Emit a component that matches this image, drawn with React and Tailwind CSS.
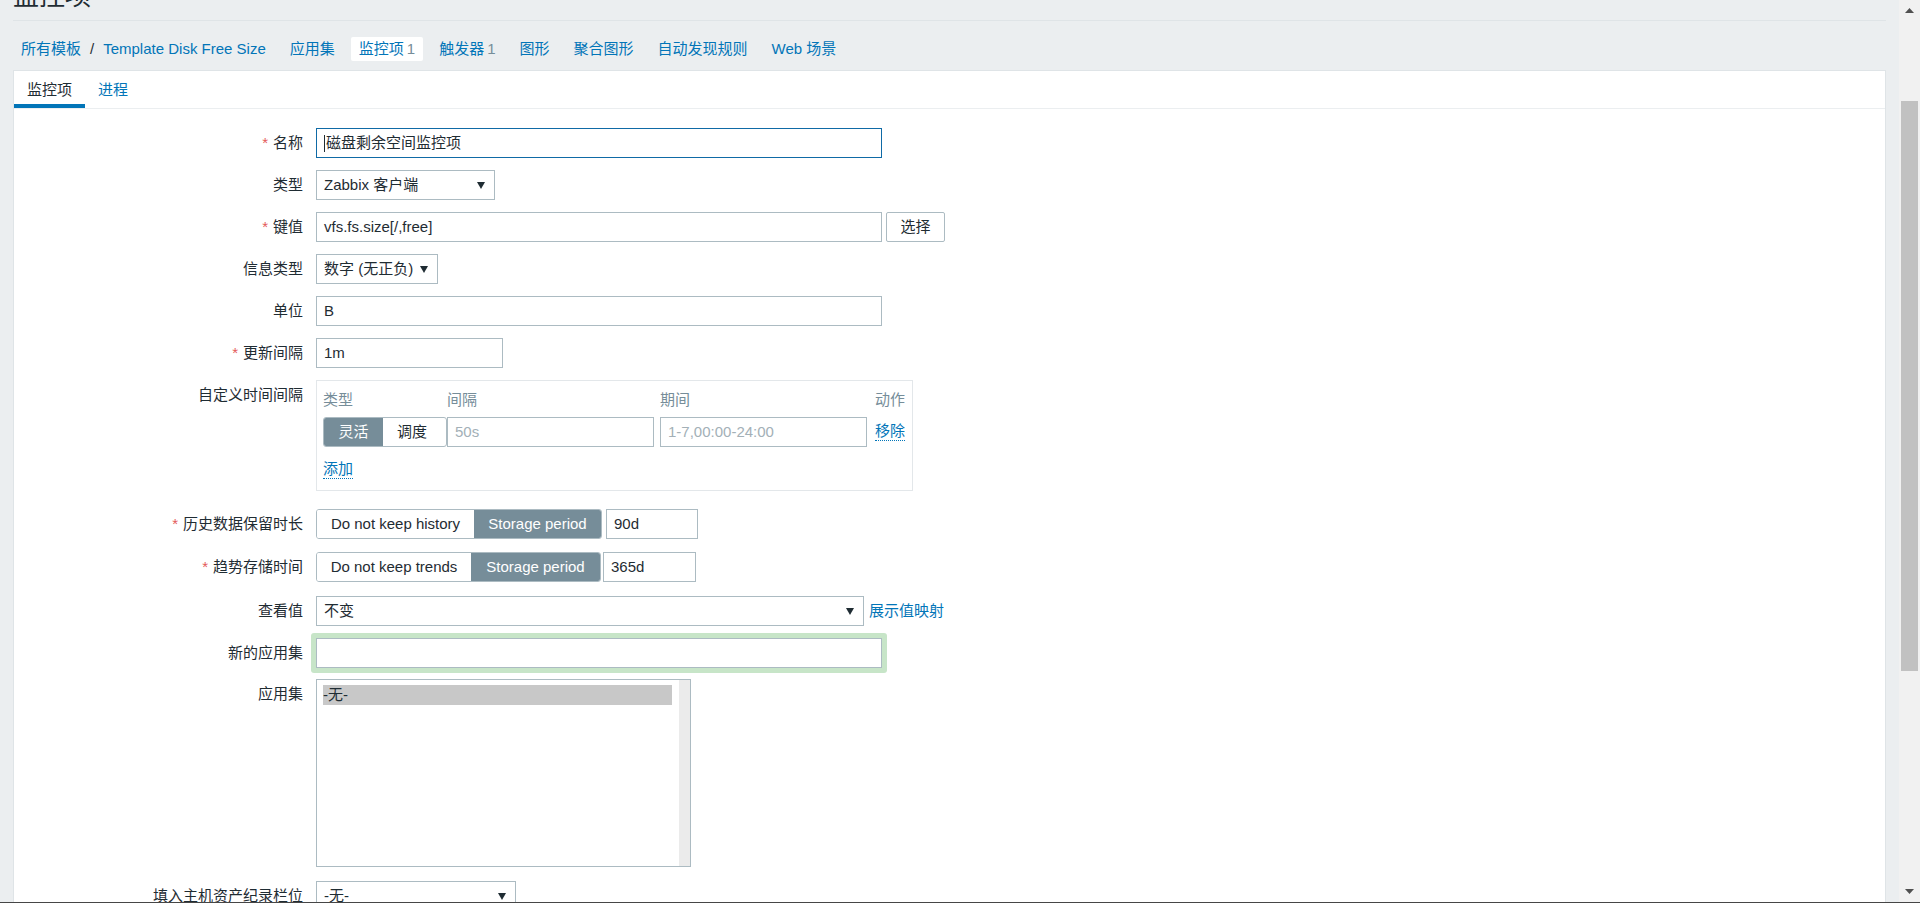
import React from "react";

const Arrow = () => (
  <svg width="8" height="7" viewBox="0 0 8 7" className="shrink-0">
    <polygon points="0,0 8,0 4,7" fill="#1f2c33" />
  </svg>
);

const Label = ({ children, req, className = "" }) => (
  <div className={`w-[302px] shrink-0 pr-[13px] text-right leading-[30px] text-[#1f2c33] ${className}`}>
    {req && <span className="mr-[5px] text-[#e45959]">*</span>}
    {children}
  </div>
);

const Field = ({ children, className = "" }) => (
  <div className={`flex h-[30px] shrink-0 items-center border bg-white pl-[7px] ${className}`}>
    {children}
  </div>
);

const Select = ({ value, className = "" }) => (
  <Field className={`justify-between border-[#acbbc2] pr-[9px] text-[#1f2c33] ${className}`}>
    <span>{value}</span>
    <Arrow />
  </Field>
);

const Segmented = ({ items, active, widths }) => (
  <div className="flex h-[30px] shrink-0 overflow-hidden rounded-[3px] border border-[#acbbc2]">
    {items.map((it, i) => (
      <div
        key={it}
        className={`flex items-center justify-center ${widths[i]} ${
          i === active ? "bg-[#768d99] text-white" : "bg-white text-[#1f2c33]"
        }`}
      >
        {it}
      </div>
    ))}
  </div>
);

const Row = ({ children, className = "mb-[12px]" }) => <div className={`flex ${className}`}>{children}</div>;

const ActionLink = ({ children }) => (
  <span className="border-b border-dotted border-[#0275b8] pb-[1px] leading-[16px] text-[#0275b8]">{children}</span>
);

const Scrollbar = () => (
  <div className="flex w-[21px] shrink-0 flex-col bg-[#f1f1f1]">
    <div className="flex h-[21px] items-center justify-center">
      <svg width="9" height="5" viewBox="0 0 9 5">
        <polygon points="4.5,0 9,5 0,5" fill="#505050" />
      </svg>
    </div>
    <div className="ml-[2px] mt-[80px] h-[570px] w-[17px] bg-[#c1c1c1]" />
    <div className="flex-1" />
    <div className="flex h-[21px] items-center justify-center">
      <svg width="9" height="5" viewBox="0 0 9 5">
        <polygon points="0,0 9,0 4.5,5" fill="#505050" />
      </svg>
    </div>
  </div>
);

const navItems = ["图形", "聚合图形", "自动发现规则", "Web 场景"];

export default function App() {
  return (
    <div className="flex h-[903px] w-full overflow-hidden border-b border-[#464646] bg-[#ebeef0] text-[15px] text-[#1f2c33] font-['Liberation_Sans','Noto_Sans_CJK_SC',sans-serif]">
      <div className="min-w-0 flex-1 px-[13px]">
        <div className="mt-[-17px] border-b border-[#dfe4e7] pb-[11px]">
          <h1 className="text-[26px] leading-[26px] text-[#1f2c33]">监控项</h1>
        </div>

        <nav className="mb-[9px] mt-[16px] flex h-[24px] items-center gap-[24px] pl-[8px] text-[#0275b8]">
          <div className="flex items-center">
            <span>所有模板</span>
            <span className="mx-[9px] text-[#1f2c33]">/</span>
            <span>Template Disk Free Size</span>
          </div>
          <span>应用集</span>
          <span className="-mx-[8px] flex h-[24px] items-center rounded-[2px] bg-white px-[8px]">
            监控项<span className="ml-[3px] text-[#768d99]">1</span>
          </span>
          <span>
            触发器<span className="ml-[3px] text-[#768d99]">1</span>
          </span>
          {navItems.map((n) => (
            <span key={n}>{n}</span>
          ))}
        </nav>

        <div className="h-[900px] border border-[#dfe4e7] bg-white">
          <div className="flex border-b border-[#ebeef0]">
            <div className="border-b-4 border-[#0275b8] px-[13px] pb-[5px] pt-[10px] leading-[18px] text-[#1f2c33]">监控项</div>
            <div className="px-[13px] pb-[9px] pt-[10px] leading-[18px] text-[#0275b8]">进程</div>
          </div>

          <div className="pt-[19px]">
            <Row>
              <Label req>名称</Label>
              <Field className="w-[566px] border-[#0f6aa6] text-[#1f2c33]">
                <span className="mr-px h-[17px] w-px bg-[#1f2c33]" />
                磁盘剩余空间监控项
              </Field>
            </Row>
            <Row>
              <Label>类型</Label>
              <Select value="Zabbix 客户端" className="w-[179px]" />
            </Row>
            <Row>
              <Label req>键值</Label>
              <Field className="w-[566px] border-[#acbbc2]">vfs.fs.size[/,free]</Field>
              <div className="ml-[4px] flex h-[30px] w-[59px] items-center justify-center rounded-[2px] border border-[#acbbc2] bg-white">
                选择
              </div>
            </Row>
            <Row>
              <Label>信息类型</Label>
              <Select value="数字 (无正负)" className="w-[122px]" />
            </Row>
            <Row>
              <Label>单位</Label>
              <Field className="w-[566px] border-[#acbbc2]">B</Field>
            </Row>
            <Row>
              <Label req>更新间隔</Label>
              <Field className="w-[187px] border-[#acbbc2]">1m</Field>
            </Row>
            <Row className="mb-[18px]">
              <Label>自定义时间间隔</Label>
              <div className="h-[111px] w-[597px] border border-[#e3e7ea] px-[6px] pt-[6px]">
                <div className="flex h-[27px] items-center text-[#768d99]">
                  <div className="w-[124px]">类型</div>
                  <div className="w-[213px]">间隔</div>
                  <div className="w-[215px]">期间</div>
                  <div>动作</div>
                </div>
                <div className="mt-[3px] flex h-[30px] items-center">
                  <div className="w-[124px]">
                    <Segmented items={["灵活", "调度"]} active={0} widths={["w-[59px]", "w-[58px]"]} />
                  </div>
                  <div className="w-[213px]">
                    <Field className="w-[207px] border-[#acbbc2] text-[#a3b0b7]">50s</Field>
                  </div>
                  <div className="w-[215px]">
                    <Field className="w-[207px] border-[#acbbc2] text-[#a3b0b7]">1-7,00:00-24:00</Field>
                  </div>
                  <ActionLink>移除</ActionLink>
                </div>
                <div className="mt-[9px] flex h-[28px] items-center">
                  <ActionLink>添加</ActionLink>
                </div>
              </div>
            </Row>
            <Row className="mb-[13px]">
              <Label req>历史数据保留时长</Label>
              <Segmented items={["Do not keep history", "Storage period"]} active={1} widths={["w-[157px]", "w-[127px]"]} />
              <Field className="ml-[4px] w-[92px] border-[#acbbc2]">90d</Field>
            </Row>
            <Row className="mb-[14px]">
              <Label req>趋势存储时间</Label>
              <Segmented items={["Do not keep trends", "Storage period"]} active={1} widths={["w-[154px]", "w-[129px]"]} />
              <Field className="ml-[2px] w-[93px] border-[#acbbc2]">365d</Field>
            </Row>
            <Row className="mb-[7px]">
              <Label>查看值</Label>
              <Select value="不变" className="w-[548px]" />
              <span className="ml-[5px] leading-[30px] text-[#0275b8]">展示值映射</span>
            </Row>
            <Row className="mb-[6px]">
              <Label className="pt-[5px]">新的应用集</Label>
              <div className="-ml-[5px] rounded-[3px] bg-[#c7e5c8] p-[5px]">
                <Field className="w-[566px] border-[#acbbc2]" />
              </div>
            </Row>
            <Row className="mb-[14px]">
              <Label>应用集</Label>
              <div className="flex h-[188px] w-[375px] border border-[#acbbc2] bg-white">
                <div className="flex-1 pl-[6px] pr-[7px] pt-[5px]">
                  <div className="h-[20px] bg-[#c8c8c8] leading-[20px] text-[#1f2c33]">-无-</div>
                </div>
                <div className="w-[11px] bg-[#ebebeb]" />
              </div>
            </Row>
            <Row>
              <Label>填入主机资产纪录栏位</Label>
              <Select value="-无-" className="w-[200px]" />
            </Row>
          </div>
        </div>
      </div>
      <Scrollbar />
    </div>
  );
}
